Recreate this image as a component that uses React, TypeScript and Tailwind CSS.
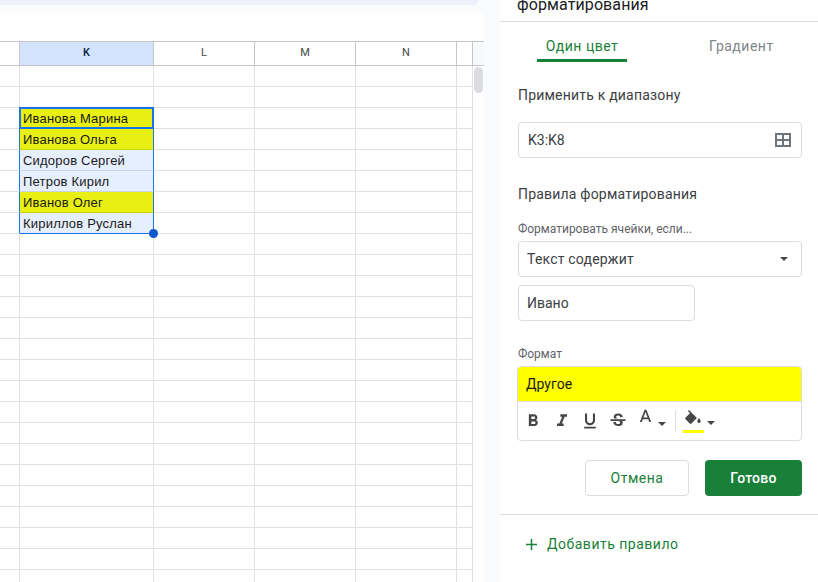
const names: Record<number, { text: string; hit: boolean }> = {
  2: { text: 'Иванова Марина', hit: true },
  3: { text: 'Иванова Ольга', hit: true },
  4: { text: 'Сидоров Сергей', hit: false },
  5: { text: 'Петров Кирил', hit: false },
  6: { text: 'Иванов Олег', hit: true },
  7: { text: 'Кириллов Руслан', hit: false },
};

const rows = Array.from({ length: 25 }, (_, i) => i);

function Icon({ d, size = 20, className = '' }: { d: string; size?: number; className?: string }) {
  return (
    <svg width={size} height={size} viewBox="0 0 24 24" fill="#444746" className={`shrink-0 ${className}`}>
      <path d={d} />
    </svg>
  );
}

function Caret({ className = '' }: { className?: string }) {
  return <div className={`w-0 h-0 border-x-[4px] border-x-transparent border-t-[4px] border-t-[#444746] ${className}`} />;
}

function Sheet() {
  return (
    <div className="flex-1 bg-white overflow-hidden pt-[28px] font-['Liberation_Sans',sans-serif]">
      <div className="flex h-[25px] border-y border-[#c4c7c5] font-['Roboto',sans-serif] text-[11px] text-[#444746]">
        <div className="w-[20px] border-r border-[#c4c7c5]" />
        <div className="w-[134px] bg-[#d3e3fd] border-r border-[#c4c7c5] flex items-center justify-center font-medium text-[#0b1f3f]">K</div>
        <div className="w-[101px] border-r border-[#c4c7c5] flex items-center justify-center">L</div>
        <div className="w-[101px] border-r border-[#c4c7c5] flex items-center justify-center">M</div>
        <div className="w-[101px] border-r border-[#c4c7c5] flex items-center justify-center">N</div>
        <div className="w-[16px] border-r border-[#c4c7c5]" />
        <div className="flex-1 bg-[#f8f9fa]" />
      </div>
      {rows.map((i) => {
        const cell = names[i];
        const inRange = !!cell;
        return (
          <div key={i} className="flex h-[21px]">
            <div className={`w-[20px] border-r border-b border-b-[#e1e1e1] ${inRange ? 'border-r-[#1a73e8]' : 'border-r-[#e1e1e1]'}`} />
            <div
              className={`relative w-[134px] border-r border-b flex items-center pl-[3px] pt-[2px] text-[13px] tracking-[0.2px] text-[#1a1a1a] whitespace-nowrap ${
                inRange ? 'border-r-[#1a73e8]' : 'border-r-[#e1e1e1]'
              } ${
                i === 1 || i === 7
                  ? 'border-b-[#1a73e8]'
                  : cell?.hit
                    ? 'border-b-[#cdd20f]'
                    : inRange
                      ? 'border-b-[#c9d2e0]'
                      : 'border-b-[#e1e1e1]'
              } ${cell ? (cell.hit ? 'bg-[#e8ef12]' : 'bg-[#e6effd]') : ''}`}
            >
              {cell?.text}
              {i === 2 && <div className="absolute -left-px -top-px -right-px -bottom-px border-2 border-[#1a73e8]" />}
              {i === 7 && <div className="absolute -right-[5px] -bottom-[5px] w-[9px] h-[9px] rounded-full bg-[#0b57d0] z-10" />}
            </div>
            <div className="w-[101px] border-r border-b border-[#e1e1e1]" />
            <div className="w-[101px] border-r border-b border-[#e1e1e1]" />
            <div className="w-[101px] border-r border-b border-[#e1e1e1]" />
            <div className="w-[16px] border-r border-b border-[#e1e1e1]" />
            <div className="flex-1 relative">
              {i === 0 && <div className="absolute left-[1px] top-[1px] w-[9px] h-[26px] rounded-full bg-[#dadce0]" />}
            </div>
          </div>
        );
      })}
    </div>
  );
}

function Panel() {
  return (
    <div className="w-[318px] ml-[16px] bg-white flex flex-col font-['Roboto',sans-serif]">
      <div className="h-[22px] border-b border-[#dadce0] flex items-end pl-[17px] overflow-hidden">
        <div className="text-[16px] leading-[24px] mb-[4px] text-[#202124] tracking-[0.1px]">форматирования</div>
      </div>
      <div className="flex h-[40px] text-[14px] tracking-[0.5px]">
        <div className="ml-[37px] w-[90px] h-[40px] border-b-[3px] border-[#188038] flex items-center justify-center pt-[11px] text-[#188038]">Один цвет</div>
        <div className="ml-[82px] flex items-center pt-[8px] text-[#80868b]">Градиент</div>
      </div>
      <div className="pl-[18px] pr-[16px]">
        <div className="mt-[25px] text-[14px] leading-[16px] tracking-[0.2px] text-[#3c4043]">Применить к диапазону</div>
        <div className="mt-[19px] h-[36px] border border-[#dadce0] rounded-[4px] flex items-center justify-between pl-[9px] pr-[10px] text-[14px] text-[#3c4043]">
          <span>K3:K8</span>
          <svg width="16" height="14" viewBox="0 0 16 14" fill="none" stroke="#70757a" strokeWidth="2">
            <path d="M1 1h14v12H1zM8 1v12M1 7h14" />
          </svg>
        </div>
        <div className="mt-[28px] text-[14px] leading-[16px] tracking-[0.2px] text-[#3c4043]">Правила форматирования</div>
        <div className="mt-[20px] text-[12px] leading-[14px] text-[#5f6368]">Форматировать ячейки, если...</div>
        <div className="mt-[5px] h-[36px] border border-[#dadce0] rounded-[4px] flex items-center justify-between pl-[8px] pr-[13px] text-[14px] tracking-[0.2px] text-[#3c4043]">
          <span>Текст содержит</span>
          <Caret className="border-t-[#3c4043]" />
        </div>
        <div className="mt-[8px] w-[177px] h-[36px] border border-[#dadce0] rounded-[4px] flex items-center pl-[8px] text-[14px] text-[#3c4043]">Ивано</div>
        <div className="mt-[26px] text-[12px] leading-[14px] text-[#5f6368]">Формат</div>
        <div className="mt-[5px] -ml-px w-[285px] h-[75px] border border-[#dadce0] rounded-[4px] overflow-hidden">
          <div className="h-[35px] bg-[#ffff00] flex items-center pl-[8px] pt-[1px] text-[14px] text-[#1a1a1a] border-b border-[#dadce0]">Другое</div>
          <div className="flex items-center h-[38px] pl-[5px]">
            <Icon d="M15.6 10.79c.97-.67 1.65-1.77 1.65-2.79 0-2.26-1.75-4-4-4H7v14h7.04c2.09 0 3.71-1.7 3.71-3.79 0-1.52-.86-2.82-2.15-3.42zM10 6.5h3c.83 0 1.5.67 1.5 1.5s-.67 1.5-1.5 1.5h-3v-3zm3.5 9H10v-3h3.5c.83 0 1.5.67 1.5 1.5s-.67 1.5-1.5 1.5z" />
            <Icon d="M10 4v3h2.21l-3.42 8H6v3h8v-3h-2.21l3.42-8H18V4z" className="ml-[9px]" />
            <Icon d="M12 17c3.31 0 6-2.69 6-6V3h-2.5v8c0 1.93-1.57 3.5-3.5 3.5S8.5 12.93 8.5 11V3H6v8c0 3.31 2.69 6 6 6zm-7 2v2h14v-2H5z" className="ml-[8px]" />
            <Icon d="M6.85 7.08C6.85 4.37 9.45 3 12.24 3c1.64 0 3 .49 3.9 1.28.77.65 1.46 1.73 1.46 3.24h-3.01c0-.31-.05-.59-.15-.85-.29-.86-1.2-1.28-2.25-1.28-1.86 0-2.34 1.02-2.34 1.7 0 .48.25.88.74 1.21.38.25.77.48 1.41.7H7.39c-.21-.34-.54-.89-.54-1.92zM21 12v-2H3v2h9.62c1.15.45 1.96.75 1.96 1.97 0 1-.81 1.67-2.28 1.67-1.54 0-2.93-.54-2.93-2.51H6.4c0 .55.08 1.13.24 1.58.81 2.29 3.29 3.3 5.67 3.3 2.27 0 5.3-.89 5.3-4.05 0-.3-.03-1.16-.41-1.96H21z" className="ml-[8px]" />
            <Icon d="M11 3L5.5 17h2.25l1.12-3h6.25l1.12 3h2.25L13 3h-2zm-1.38 9L12 5.67 14.38 12H9.62z" size={21} className="ml-[7px] -mt-[8px]" />
            <Caret className="ml-[2px] mt-[6px]" />
            <div className="ml-[9px] w-px h-[20px] bg-[#dadce0]" />
            <div className="ml-[7px] w-[21px] flex flex-col items-center">
              <svg width="17" height="15" viewBox="0 0 17 15" fill="#444746">
                <path d="M4 0L2.9 1.1 5 3.2.6 7.6c-.5.5-.5 1.2 0 1.7l4.2 4.2c.5.5 1.2.5 1.7 0l5.4-5.4z" />
                <path d="M14 8.2s-1.7 1.8-1.7 3c0 .9.8 1.7 1.7 1.7s1.7-.8 1.7-1.7c0-1.2-1.7-3-1.7-3z" />
              </svg>
              <div className="mt-[5px] w-[21px] h-[3px] bg-[#ffff00]" />
            </div>
            <Caret className="ml-[3px] mt-[4px]" />
          </div>
        </div>
        <div className="mt-[19px] flex justify-end text-[14px] tracking-[0.5px]">
          <div className="w-[104px] h-[36px] border border-[#dadce0] rounded-[4px] flex items-center justify-center text-[#188038]">Отмена</div>
          <div className="ml-[16px] w-[97px] h-[36px] bg-[#188038] rounded-[4px] flex items-center justify-center text-white font-medium tracking-[0.25px]">Готово</div>
        </div>
      </div>
      <div className="mt-[18px] border-t border-[#dadce0] pl-[26px] pt-[19px] flex items-center text-[14px] tracking-[0.5px] text-[#188038]">
        <svg width="11" height="11" viewBox="0 0 11 11" stroke="#188038" strokeWidth="1.5" fill="none">
          <path d="M5.5 0v11M0 5.5h11" />
        </svg>
        <span className="ml-[10px]">Добавить правило</span>
      </div>
    </div>
  );
}

export default function App() {
  return (
    <div className="w-[818px] h-[582px] overflow-hidden flex bg-[#f9fbfd]">
      <div className="w-[484px] flex flex-col">
        <div className="h-[5px] w-[478px] bg-[#edf2fa] rounded-br-[8px]" />
        <div className="h-[8px]" />
        <Sheet />
      </div>
      <Panel />
    </div>
  );
}
